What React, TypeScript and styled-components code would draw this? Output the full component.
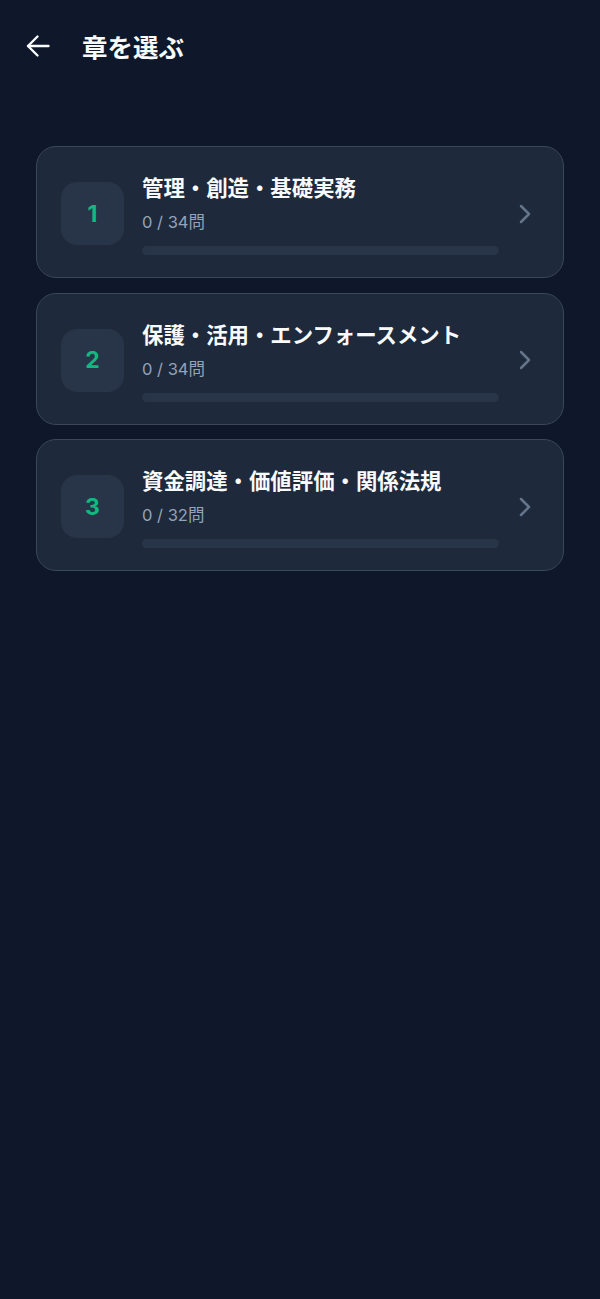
import React from 'react'
import styled, { createGlobalStyle } from 'styled-components';

const GlobalStyle = createGlobalStyle`
    html, body {
        margin: 0;
        padding: 0;
        background: #0f172a;
    }
    body {
        font-family: Inter, "Noto Sans CJK JP", sans-serif;
        color: #f8fafc;
    }
`;

const Page = styled.div`
    min-height: 1299px;
    background: #0f172a;
`;

const Header = styled.header`
    display: flex;
    align-items: center;
    gap: 32px;
    height: 92px;
    padding: 0 0 0 26px;
`;

const BackButton = styled.button`
    display: flex;
    align-items: center;
    justify-content: center;
    width: 24px;
    height: 24px;
    padding: 0;
    border: none;
    background: none;
    color: #f8fafc;
    cursor: pointer;
`;

const Title = styled.h1`
    margin: 0;
    font-family: "Noto Sans CJK JP", sans-serif;
    font-size: 25.5px;
    font-weight: 700;
    line-height: 1;
    color: #f8fafc;
`;

const List = styled.ul`
    list-style: none;
    margin: 54px 36px 0 36px;
    padding: 0;
    display: flex;
    flex-direction: column;
    gap: 14.5px;
`;

const Card = styled.li`
    display: flex;
    align-items: center;
    padding: 25px 32px 22px 24px;
    background: #1e293b;
    border: 1px solid #3a4759;
    border-radius: 20px;
    cursor: pointer;
`;

const NumberBox = styled.div`
    flex: 0 0 auto;
    display: flex;
    align-items: center;
    justify-content: center;
    width: 63px;
    height: 63px;
    border-radius: 16px;
    background: #283548;
    color: #10b981;
    font-family: Inter, sans-serif;
    font-size: 23px;
    font-weight: 700;
`;

const Body = styled.div`
    flex: 1;
    margin-left: 18px;
    min-width: 0;
`;

const ChapterName = styled.div`
    font-family: "Noto Sans CJK JP", sans-serif;
    font-size: 21.4px;
    font-weight: 700;
    line-height: 30px;
    color: #f8fafc;
    white-space: nowrap;
`;

const Count = styled.div`
    margin-top: 7px;
    font-size: 16.5px;
    line-height: 26px;
    color: #94a3b8;
`;

const Track = styled.div`
    margin-top: 11px;
    height: 9px;
    border-radius: 999px;
    background: #283548;
    overflow: hidden;
`;

const Fill = styled.div`
    height: 100%;
    background: #10b981;
    border-radius: 999px;
`;

const Chevron = styled.div`
    flex: 0 0 auto;
    display: flex;
    margin-left: 20px;
    color: #64748b;
`;

type Chapter = { id: number, name: string, done: number, total: number };

const chapters: Chapter[] = [
    { id: 1, name: '管理・創造・基礎実務', done: 0, total: 34 },
    { id: 2, name: '保護・活用・エンフォースメント', done: 0, total: 34 },
    { id: 3, name: '資金調達・価値評価・関係法規', done: 0, total: 32 },
];

const ArrowLeft = () => (
    <svg width="24" height="24" viewBox="0 0 24 24" fill="none" stroke="currentColor" strokeWidth="2.4" strokeLinecap="round" strokeLinejoin="round">
        <path d="M22.5 12H2" />
        <path d="M11.5 2.5 2 12l9.5 9.5" />
    </svg>
);

const ChevronRight = () => (
    <svg width="12" height="20" viewBox="0 0 12 20" fill="none" stroke="currentColor" strokeWidth="2.5" strokeLinecap="round" strokeLinejoin="round">
        <path d="M2 2l8 8-8 8" />
    </svg>
);

const ChapterCard = ({ id, name, done, total }: Chapter) => {
    return (
        <Card>
            <NumberBox>{id}</NumberBox>
            <Body>
                <ChapterName>{name}</ChapterName>
                <Count>{`${done} / ${total}問`}</Count>
                <Track>
                    <Fill style={{ width: `${(done / total) * 100}%` }} />
                </Track>
            </Body>
            <Chevron><ChevronRight /></Chevron>
        </Card>
    )
}

const App = () => {
    return (
        <Page>
            <GlobalStyle />
            <Header>
                <BackButton aria-label="戻る"><ArrowLeft /></BackButton>
                <Title>章を選ぶ</Title>
            </Header>
            <List>
                {chapters.map(c => <ChapterCard key={c.id} {...c} />)}
            </List>
        </Page>
    )
}

export default App;
